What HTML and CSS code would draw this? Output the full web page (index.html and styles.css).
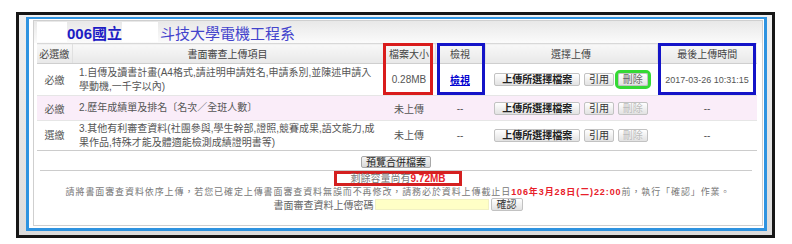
FILE: index.html
```html
<!DOCTYPE html>
<html lang="zh-Hant">
<head>
  <meta charset="UTF-8">
  <title>書面審查資料上傳</title>
  <link rel="stylesheet" href="styles.css">
</head>
<body>
  <div class="window">
    <div class="frame">
      <div class="panel">
        <div class="title">
          <span class="mask mask-a"></span>
          <b class="school">006國立</b>
          <span class="mask mask-b"></span>
          <span class="dept">斗技大學電機工程系</span>
        </div>

        <div class="list-wrap">
          <table class="list">
            <colgroup>
              <col style="width:35px">
              <col style="width:311px">
              <col style="width:52px">
              <col style="width:50px">
              <col style="width:172px">
              <col style="width:100px">
            </colgroup>
            <tr class="head">
              <th>必選繳</th>
              <th>書面審查上傳項目</th>
              <th>檔案大小</th>
              <th>檢視</th>
              <th>選擇上傳</th>
              <th>最後上傳時間</th>
            </tr>
            <tr class="row-1">
              <td class="c">必繳</td>
              <td class="item">1.自傳及讀書計畫(A4格式,請註明申請姓名,申請系別,並陳述申請入學動機,一千字以內)</td>
              <td class="c">0.28MB</td>
              <td class="c"><a href="#" class="view">檢視</a></td>
              <td class="c">
                <button class="btn btn-up">上傳所選擇檔案</button>
                <button class="btn btn-s">引用</button>
                <button class="btn btn-s btn-del">刪除</button>
              </td>
              <td class="c date">2017-03-26 10:31:15</td>
            </tr>
            <tr class="row-2">
              <td class="c">必繳</td>
              <td class="item">2.歷年成績單及排名〔名次／全班人數〕</td>
              <td class="c">未上傳</td>
              <td class="c">--</td>
              <td class="c">
                <button class="btn btn-up">上傳所選擇檔案</button>
                <button class="btn btn-s">引用</button>
                <button class="btn btn-s" disabled>刪除</button>
              </td>
              <td class="c">--</td>
            </tr>
            <tr class="row-3">
              <td class="c">選繳</td>
              <td class="item">3.其他有利審查資料(社團參與,學生幹部,證照,競賽成果,語文能力,成果作品,特殊才能及體適能檢測成績證明書等)</td>
              <td class="c">未上傳</td>
              <td class="c">--</td>
              <td class="c">
                <button class="btn btn-up">上傳所選擇檔案</button>
                <button class="btn btn-s">引用</button>
                <button class="btn btn-s" disabled>刪除</button>
              </td>
              <td class="c">--</td>
            </tr>
          </table>
          <!-- 標示框 -->
          <span class="mark mark-red mark-size"></span>
          <span class="mark mark-blue mark-view"></span>
          <span class="mark mark-blue mark-time"></span>
        </div>

        <div class="preview">
          <button class="btn btn-preview">預覽合併檔案</button>
        </div>
        <div class="quota">
          <span class="quota-box">剩餘容量尚有<em>9.72MB</em></span>
        </div>
        <p class="note">請將書面審查資料依序上傳，若您已確定上傳書面審查資料無誤而不再修改，請務必於資料上傳截止日<em>106年3月28日(二)22:00</em>前，執行「確認」作業。</p>
        <div class="pw">
          <span>書面審查資料上傳密碼</span>
          <input type="password" class="pw-input">
          <button class="btn btn-ok">確認</button>
        </div>
      </div>
    </div>
  </div>
</body>
</html>
```

FILE: styles.css
```css
body {
  margin: 0;
  background: #fff;
  font-family: "Liberation Sans", "Noto Sans CJK TC", sans-serif;
  font-size: 10px;
  color: #555;
}
.window {
  box-sizing: border-box;
  width: 759px;
  height: 226px;
  margin: 12px 0 0 16px;
  border: 3px solid #161616;
  padding: 2px 5px 4px 7px;
  background: linear-gradient(#f0f0f0, #dcdcdc);
}
.frame {
  box-sizing: border-box;
  height: 100%;
  border: 3px solid #2e93e0;
  border-top-width: 2px;
  background: #fff;
  padding: 1px 1px 2px 4px;
}
.panel {
  box-sizing: border-box;
  height: 100%;
  border: 1px solid #cfcfcf;
  background: #fff;
}
.title {
  height: 22px;
  display: flex;
  align-items: center;
  padding-left: 3px;
  background: linear-gradient(#e8e8e8, #fbfbfb);
}
.mask {
  height: 20px;
  background: #fff;
}
.mask-a {
  width: 30px;
}
.mask-b {
  width: 36px;
}
.school {
  font-size: 15px;
  color: #1c1cc4;
}
.dept {
  margin-left: 2px;
  font-size: 15px;
  color: #4343cc;
}
.list-wrap {
  position: relative;
  margin-left: 3px;
  width: 720px;
}
.list {
  width: 720px;
  table-layout: fixed;
  border-collapse: collapse;
}
.list th {
  height: 19px;
  padding: 0;
  background: linear-gradient(#f8f8f8, #e8e8e8);
  border-top: 1px solid #d8d8d8;
  border-bottom: 1px solid #cfcfcf;
  border-left: 1px solid #e0e0e0;
  font-weight: normal;
  color: #444;
}
.list th:first-child {
  border-left: none;
}
.list td {
  padding: 0;
  border-bottom: 1px solid #e6e6e6;
  color: #555;
}
.list td.c {
  text-align: center;
}
.list td.item {
  padding: 0 6px 0 7px;
  line-height: 14px;
}
.row-1 td {
  height: 31px;
}
.row-2 td {
  height: 24px;
  background: #faedf9;
}
.row-3 td {
  height: 29px;
  line-height: 13px;
  border-bottom: 1px solid #cccccc;
}
.view {
  color: #0000d0;
  font-weight: bold;
}
.date {
  font-size: 9px;
  color: #666;
}
.btn {
  height: 13px;
  padding: 0 7px;
  margin: 0;
  border: 1px solid #c2c2c2;
  border-radius: 2px;
  background: linear-gradient(#ffffff, #e2e2e2);
  font-family: "Liberation Sans", "Noto Sans CJK TC", sans-serif;
  font-size: 10px;
  line-height: 11px;
  color: #333;
  vertical-align: middle;
}
.btn-up {
  font-weight: bold;
  color: #222;
}
.btn-s {
  padding: 0 4px;
  margin-left: 1px;
}
.btn:disabled {
  color: #bcbcbc;
}
.btn-del {
  outline: 3px solid #35d935;
  color: #666;
}
.mark {
  position: absolute;
  top: 0;
  height: 52px;
  box-sizing: border-box;
  border: 3px solid;
  pointer-events: none;
}
.mark-red {
  border-color: #d91c1c;
}
.mark-blue {
  border-color: #1414c8;
}
.mark-size {
  left: 346px;
  width: 50px;
}
.mark-view {
  left: 400px;
  width: 48px;
}
.mark-time {
  left: 621px;
  width: 98px;
}
.preview {
  margin: 0 10px 0 6px;
  padding: 5px 0 2px;
  border-bottom: 1px solid #cccccc;
  text-align: center;
}
.btn-preview {
  height: 12px;
  padding: 0 4px;
  border-color: #a8a8a8;
  background: linear-gradient(#f6f6f6, #d8d8d8);
  color: #222;
}
.quota {
  text-align: center;
}
.quota-box {
  display: inline-block;
  height: 9px;
  line-height: 9px;
  padding: 0 13px;
  border: 3px solid #d42020;
  color: #777;
}
.quota-box em,
.note em {
  font-style: normal;
  font-weight: bold;
  color: #e8202a;
}
.note {
  margin: 0;
  line-height: 12px;
  text-align: center;
  font-size: 9px;
  letter-spacing: 0.9px;
  color: #777;
}
.pw {
  display: flex;
  justify-content: center;
  align-items: center;
  height: 13px;
  color: #666;
}
.pw-input {
  box-sizing: border-box;
  width: 114px;
  height: 11px;
  margin: 0 2px 0 1px;
  padding: 0;
  border: 1px solid #f1f1c4;
  background: #ffffc6;
}
.btn-ok {
  height: 13px;
  padding: 0 5px;
}
```
